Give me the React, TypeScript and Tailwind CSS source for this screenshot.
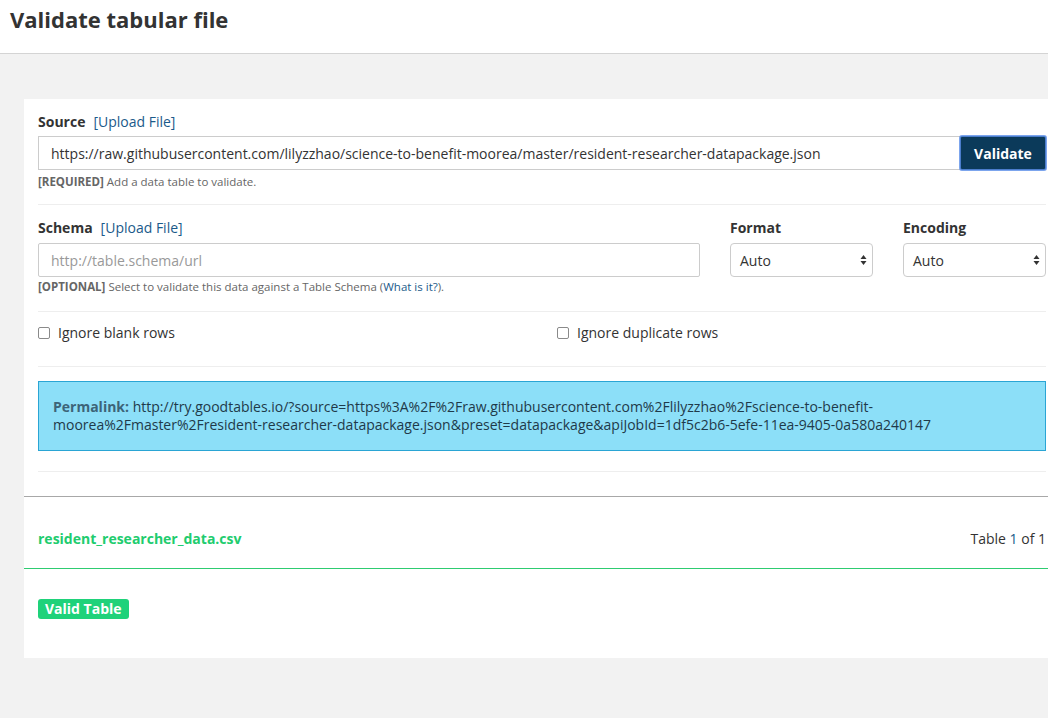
const font = { fontFamily: '"Open Sans", "Liberation Sans", sans-serif' };

function Arrows() {
  return (
    <svg width="7" height="12" viewBox="0 0 7 12" className="absolute right-[5px] top-1/2 -translate-y-1/2 pointer-events-none">
      <path d="M3.5 1 L6.5 5 H0.5 Z" fill="#333" />
      <path d="M3.5 11 L6.5 7 H0.5 Z" fill="#333" />
    </svg>
  );
}

function Select({ label }: { label: string }) {
  return (
    <div className="w-[143px]">
      <div className="text-[14px] font-bold text-[#333] leading-5 mb-[5px]">{label}</div>
      <div className="relative h-[34px] border border-[#ccc] rounded-[4px] bg-white flex items-center pl-[9px] text-[14px] text-[#333]">
        Auto
        <Arrows />
      </div>
    </div>
  );
}

function Checkbox({ label }: { label: string }) {
  return (
    <label className="flex items-center gap-[8px] text-[14px] leading-5 text-[#333]">
      <span className="w-[12px] h-[12px] border border-[#8a8a8a] rounded-[2px] bg-white" />
      {label}
    </label>
  );
}

export default function App() {
  return (
    <div className="w-[1048px] h-[718px] overflow-hidden bg-[#f2f2f2]" style={font}>
      <header className="h-[54px] bg-white border-b border-[#d4d4d4] pl-[10px] pt-[4px]">
        <h1 className="text-[22px] font-bold text-[#333] leading-[30px]">Validate tabular file</h1>
      </header>

      <div className="ml-[24px] mt-[45px] w-[1024px] bg-white pb-[38px]">
        <div className="pl-[14px] pr-[2px] pt-[13px]">
          {/* source */}
          <div className="text-[14px] leading-5 mb-[4px]">
            <span className="font-bold text-[#333]">Source</span>
            <span className="ml-[8px] text-[#1b5a8a]">[Upload File]</span>
          </div>
          <div className="flex">
            <div className="flex-1 h-[34px] border border-[#ccc] border-r-0 flex items-center pl-[12px] text-[14px] text-[#333] whitespace-nowrap overflow-hidden">
              https://raw.githubusercontent.com/lilyzzhao/science-to-benefit-moorea/master/resident-researcher-datapackage.json
            </div>
            <button className="w-[86px] h-[34px] bg-[#0b3a5a] text-white text-[14px] font-bold rounded-[2px] outline-2 outline-[#5b8fe8]/80 -outline-offset-1">
              Validate
            </button>
          </div>
          <p className="text-[11.5px] text-[#666] leading-[15px] mt-[4px]">
            <span className="font-bold">[REQUIRED]</span> Add a data table to validate.
          </p>
          <div className="border-t border-[#eee] mt-[15px]" />

          {/* schema */}
          <div className="flex pt-[13px]">
            <div className="w-[662px]">
              <div className="text-[14px] leading-5 mb-[5px]">
                <span className="font-bold text-[#333]">Schema</span>
                <span className="ml-[8px] text-[#1b5a8a]">[Upload File]</span>
              </div>
              <div className="h-[34px] border border-[#ccc] rounded-[2px] flex items-center pl-[12px] text-[14px] text-[#999]">
                http://table.schema/url
              </div>
            </div>
            <div className="ml-[30px]">
              <Select label="Format" />
            </div>
            <div className="ml-[30px]">
              <Select label="Encoding" />
            </div>
          </div>
          <p className="text-[11.5px] text-[#666] leading-[15px] mt-[2px]">
            <span className="font-bold">[OPTIONAL]</span> Select to validate this data against a Table Schema (
            <span className="text-[#1b5a8a]">What is it?</span>).
          </p>
          <div className="border-t border-[#eee] mt-[17px]" />

          {/* options */}
          <div className="flex items-center pt-[11px] pb-[23px]">
            <div className="w-[519px]">
              <Checkbox label="Ignore blank rows" />
            </div>
            <Checkbox label="Ignore duplicate rows" />
          </div>
          <div className="border-t border-[#eee]" />

          {/* permalink */}
          <div className="mt-[14px] bg-[#8cdff8] border border-[#2aa5d4] pl-[14px] pr-[10px] pt-[16px] pb-[16px] text-[14px] leading-[18px] text-[#1f3a4a]">
            <span className="font-bold text-[#3d6478]">Permalink:</span>{" "}
            http://try.goodtables.io/?source=https%3A%2F%2Fraw.githubusercontent.com%2Flilyzzhao%2Fscience-to-benefit-
            <br />
            moorea%2Fmaster%2Fresident-researcher-datapackage.json&amp;preset=datapackage&amp;apiJobId=1df5c2b6-5efe-11ea-9405-0a580a240147
          </div>
          <div className="border-t border-[#eee] mt-[20px]" />
        </div>

        {/* report */}
        <div className="mt-[24px] border-t border-[#a8a8a8]" />
        <div className="h-[71px] flex items-start justify-between pt-[32px] pl-[14px] pr-[2px] leading-5">
          <span className="text-[14px] font-bold text-[#21cc6e]">resident_researcher_data.csv</span>
          <span className="text-[14px] text-[#333]">
            Table <span className="text-[#1b5a8a]">1</span> of 1
          </span>
        </div>
        <div className="border-t border-[#2ecc71]" />
        <div className="pl-[14px] pt-[27px]">
          <span className="inline-block bg-[#1fd27a] text-white text-[14px] font-bold leading-[20px] px-[7px] rounded-[3px]">
            Valid Table
          </span>
        </div>
      </div>
    </div>
  );
}
